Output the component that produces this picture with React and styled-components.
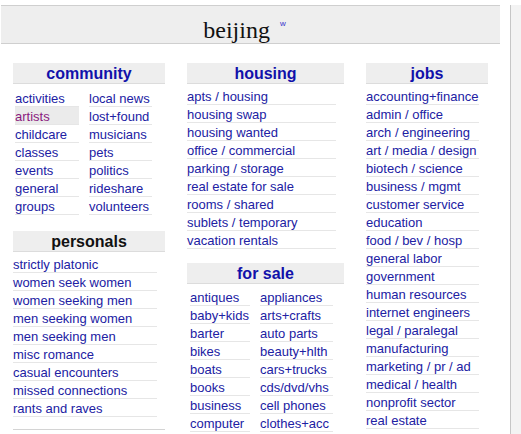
import React from 'react';
import styled, { createGlobalStyle } from 'styled-components';

const GlobalStyle = createGlobalStyle`
  body {
    margin: 0;
    background: #fff;
    font-family: "Liberation Sans", Arial, sans-serif;
    font-size: 13px;
    color: #222;
  }
  a { text-decoration: none; }
`;

const Page = styled.div`
  display: flex;
  align-items: stretch;
  height: 434px;
  overflow: hidden;
`;

const Main = styled.div`
  width: 510px;
  flex: none;
`;

const Sidebar = styled.div`
  flex: 1;
  margin-top: 5px;
  background: #f3f3f3;
  border-left: 1px solid #c6c6c6;
`;

const TopBar = styled.div`
  width: 487px;
  height: 37px;
  margin: 5px 0 0 1px;
  padding-right: 12px;
  background: #eee;
  border-top: 1px solid #cfcfcf;
  border-bottom: 1px solid #cfcfcf;
  text-align: center;
`;

const Title = styled.h2`
  margin: 0;
  font-family: "Liberation Serif", "Times New Roman", serif;
  font-weight: normal;
  font-size: 24px;
  line-height: 36px;
  color: #111;
`;

const Wiki = styled.sup`
  font-family: "Liberation Sans", Arial, sans-serif;
  font-size: 8px;
  margin-left: 10px;
  color: #3333cc;
  vertical-align: 12px;
`;

const Columns = styled.div`
  display: grid;
  grid-template-columns: 152px 157px 122px;
  column-gap: 22px;
  padding-left: 13px;
  margin-top: 19px;
`;

const Column = styled.div`
  display: flex;
  flex-direction: column;
`;

const Section = styled.div`
  margin-bottom: ${({ after }) => after || 0}px;
`;

const SectionHead = styled.h4`
  margin: 0;
  height: 20px;
  line-height: 22px;
  background: #eee;
  border-bottom: 1px solid #dcdcdc;
  text-align: center;
  font-size: 16px;
  font-weight: bold;
  color: ${({ plain }) => (plain ? '#111' : '#1111aa')};
`;

const Divider = styled.div`
  border-top: 1px solid #d4d4d4;
`;

const List = styled.ul`
  list-style: none;
  margin: ${({ top }) => top}px 0 0;
  padding: 0 0 0 ${({ inset }) => inset || 0}px;
  display: grid;
  grid-template-columns: ${({ cols }) => cols};
  grid-template-rows: repeat(${({ rows }) => rows}, 18px);
  grid-auto-flow: column;
  column-gap: 10px;
`;

const Item = styled.li`
  height: 16px;
  padding-top: 1px;
  line-height: 17px;
  border-bottom: 1px solid #e6e6e6;
  white-space: nowrap;
  background: ${({ hot }) => (hot ? '#ebebeb' : 'transparent')};

  a {
    color: ${({ hot }) => (hot ? '#8a1a7e' : '#2121a3')};
  }
`;

const community = [
  'activities', 'artists', 'childcare', 'classes', 'events', 'general', 'groups',
  'local news', 'lost+found', 'musicians', 'pets', 'politics', 'rideshare', 'volunteers',
];

const personals = [
  'strictly platonic', 'women seek women', 'women seeking men', 'men seeking women',
  'men seeking men', 'misc romance', 'casual encounters', 'missed connections', 'rants and raves',
];

const housing = [
  'apts / housing', 'housing swap', 'housing wanted', 'office / commercial',
  'parking / storage', 'real estate for sale', 'rooms / shared', 'sublets / temporary',
  'vacation rentals',
];

const forSale = [
  'antiques', 'baby+kids', 'barter', 'bikes', 'boats', 'books', 'business', 'computer',
  'appliances', 'arts+crafts', 'auto parts', 'beauty+hlth', 'cars+trucks', 'cds/dvd/vhs',
  'cell phones', 'clothes+acc',
];

const jobs = [
  'accounting+finance', 'admin / office', 'arch / engineering', 'art / media / design',
  'biotech / science', 'business / mgmt', 'customer service', 'education',
  'food / bev / hosp', 'general labor', 'government', 'human resources',
  'internet engineers', 'legal / paralegal', 'manufacturing', 'marketing / pr / ad',
  'medical / health', 'nonprofit sector', 'real estate', 'retail / wholesale',
];

const Links = ({ items, visited = [], ...props }) => (
  <List {...props}>
    {items.map(name => (
      <Item key={name} hot={visited.includes(name)}>
        <a href="#">{name}</a>
      </Item>
    ))}
  </List>
);

export default function App() {
  return (
    <>
      <GlobalStyle />
      <Page>
        <Main>
          <TopBar>
            <Title>
              beijing<Wiki>w</Wiki>
            </Title>
          </TopBar>

          <Columns>
            <Column>
              <Section after={16}>
                <SectionHead>community</SectionHead>
                <Links items={community} visited={['artists']} top={5} inset={2} cols="64px 63px" rows={7} />
              </Section>
              <Section after={12}>
                <SectionHead plain>personals</SectionHead>
                <Links items={personals} top={3} cols="144px" rows={9} />
              </Section>
              <Divider />
            </Column>

            <Column>
              <Section after={14}>
                <SectionHead>housing</SectionHead>
                <Links items={housing} top={3} cols="149px" rows={9} />
              </Section>
              <Section>
                <SectionHead>for sale</SectionHead>
                <Links items={forSale} top={4} inset={3} cols="60px 73px" rows={8} />
              </Section>
            </Column>

            <Column>
              <Section>
                <SectionHead>jobs</SectionHead>
                <Links items={jobs} top={3} cols="113px" rows={20} />
              </Section>
            </Column>
          </Columns>
        </Main>
        <Sidebar />
      </Page>
    </>
  );
}
